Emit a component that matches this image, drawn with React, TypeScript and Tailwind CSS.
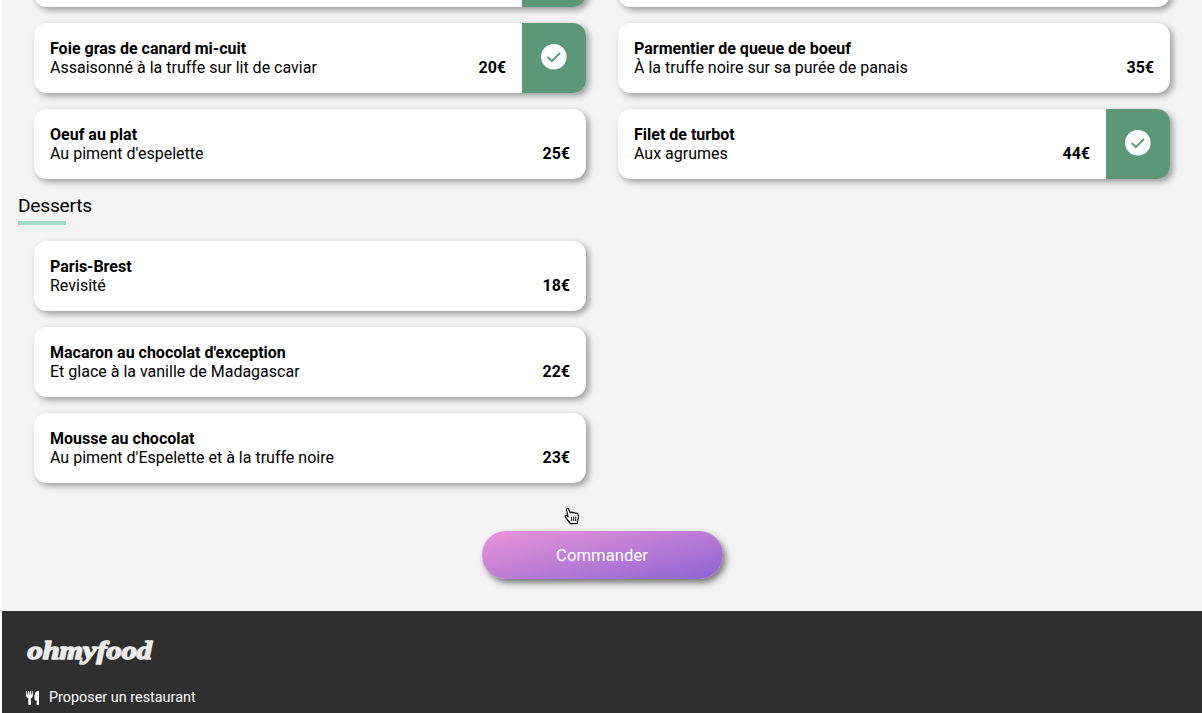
type Dish = { name: string; detail: string; price: string; selected?: boolean };

const starters: Dish[] = [
  { name: "Foie gras de canard mi-cuit", detail: "Assaisonné à la truffe sur lit de caviar", price: "20€", selected: true },
  { name: "Oeuf au plat", detail: "Au piment d'espelette", price: "25€" },
];
const mains: Dish[] = [
  { name: "Parmentier de queue de boeuf", detail: "À la truffe noire sur sa purée de panais", price: "35€" },
  { name: "Filet de turbot", detail: "Aux agrumes", price: "44€", selected: true },
];
const desserts: Dish[] = [
  { name: "Paris-Brest", detail: "Revisité", price: "18€" },
  { name: "Macaron au chocolat d'exception", detail: "Et glace à la vanille de Madagascar", price: "22€" },
  { name: "Mousse au chocolat", detail: "Au piment d'Espelette et à la truffe noire", price: "23€" },
];

function CheckIcon() {
  return (
    <svg className="mb-px" width="26" height="26" viewBox="0 0 26 26" fill="none">
      <circle cx="12.8" cy="12.8" r="12.8" fill="#fff" />
      <path d="M6.6 13 L10.9 17.2 L19 9" stroke="#5b9877" strokeWidth="2" />
    </svg>
  );
}

function CutleryIcon() {
  return (
    <svg width="14" height="16" viewBox="0 0 14 16" fill="#fff">
      <path d="M.2 1.2 Q.6.6 1 1.2 L1.3 4.8 H1.8 L2.2 1.2 Q2.7.6 3.2 1.2 L3.3 4.8 H3.8 L4 1.2 Q4.5.6 5 1.2 L5.2 4.8 H5.6 L6 1.2 Q6.4.6 6.7 1.2 L6.9 5.6 Q6.9 7.8 4.8 8.4 L5 14.2 Q5 15 4.2 15 H3 Q2.2 15 2.2 14.2 L2.4 8.4 Q.1 7.8.1 5.6Z" />
      <path d="M13 1.4 V14.2 Q13 15 12.2 15 H11.4 Q10.6 15 10.6 14.2 L10.8 10.6 H9.5 Q8.8 10.6 8.7 9.8 C8 5 9 .8 12.4.8 Q13 .8 13 1.4Z" />
    </svg>
  );
}

function Card({ dish }: { dish: Dish }) {
  return (
    <article className="flex h-[70px] w-[552px] shrink-0 overflow-hidden rounded-[13px] bg-white shadow-[3px_3px_6px_rgba(0,0,0,0.36)]">
      <div className="flex min-w-0 flex-1 items-end justify-between p-4 leading-[19px]">
        <div>
          <h3 className="font-bold">{dish.name}</h3>
          <p>{dish.detail}</p>
        </div>
        <span className="font-bold">{dish.price}</span>
      </div>
      {dish.selected && (
        <div className="flex w-16 items-center justify-center bg-[#5b9877]">
          <CheckIcon />
        </div>
      )}
    </article>
  );
}

function CutCard({ selected }: { selected?: boolean }) {
  return (
    <div className="flex h-[6.6px] items-end">
      <Card dish={{ name: "", detail: "", price: "", selected }} />
    </div>
  );
}

function Column({ dishes, selected }: { dishes: Dish[]; selected?: boolean }) {
  return (
    <div className="flex flex-col gap-4">
      <CutCard selected={selected} />
      {dishes.map((d) => <Card key={d.name} dish={d} />)}
    </div>
  );
}

function Pointer() {
  return (
    <svg className="absolute top-[507px] left-[561px]" width="18" height="18" viewBox="0 0 18 18">
      <path
        d="M5.3 10.4 L3.6 3.8 C3 1.2 5.2.6 5.9 2.7 L7.4 6 C8.1 4.9 9.4 5 9.9 6 C10.7 5.1 11.9 5.4 12.4 6.5 C13.6 5.6 15 6.4 15.2 7.8 C15.8 10.5 15.4 12 14.5 13.8 L14.2 16.5 H7.2 C6.4 14.8 4.4 13 2.8 10.6 C1.3 8.6 3 7.6 4.9 9.3"
        fill="#fff" stroke="#111" strokeWidth="1.25" strokeLinejoin="round"
      />
      <path d="M8.4 9.6 L8.8 14 M10.6 9.6 L10.8 14 M12.8 9.6 L12.7 14" stroke="#111" strokeWidth="1" />
    </svg>
  );
}

export default function App() {
  return (
    <div className="relative flex h-[713px] w-[1202px] flex-col overflow-hidden border-l-2 border-white bg-[#f3f3f3] font-['Roboto',sans-serif] text-base text-black">
      <main className="flex h-[611px] shrink-0 flex-col">
        <div className="flex gap-8 pl-8">
          <Column dishes={starters} selected />
          <Column dishes={mains} />
        </div>
        <section className="pt-[15.4px] pl-4">
          <h2 className="text-[19.2px] leading-[23px] tracking-[-0.25px]">Desserts</h2>
          <div className="mt-1 h-1 w-12 bg-[#a3d9c9]" />
          <div className="flex flex-col gap-4 pt-4 pl-4">
            {desserts.map((d) => <Card key={d.name} dish={d} />)}
          </div>
        </section>
        <button className="mt-12 ml-[480px] h-12 w-[241px] rounded-full bg-[linear-gradient(167deg,#eb94d9_0%,#8d65d2_100%)] pt-px pr-px text-[16.7px] text-white shadow-[3px_4px_6px_rgba(0,0,0,0.5)]">
          Commander
        </button>
      </main>
      <footer className="flex-1 bg-[#2f2f2f] pt-7 pl-6 text-white">
        <svg className="block overflow-visible" width="130" height="28" viewBox="0 0 130 28">
          <text
            x="1.5" y="20" textLength="124.5" lengthAdjust="spacingAndGlyphs"
            className="fill-[#ebebeb] stroke-[#ebebeb] font-['Liberation_Serif',serif] text-[25px] font-bold italic"
            strokeWidth="1.5" strokeLinejoin="round"
          >
            ohmyfood
          </text>
        </svg>
        <div className="mt-[21px] flex items-center gap-[9px] text-[14.4px] leading-[20px]">
          <CutleryIcon />
          <span>Proposer un restaurant</span>
        </div>
      </footer>
      <Pointer />
    </div>
  );
}
